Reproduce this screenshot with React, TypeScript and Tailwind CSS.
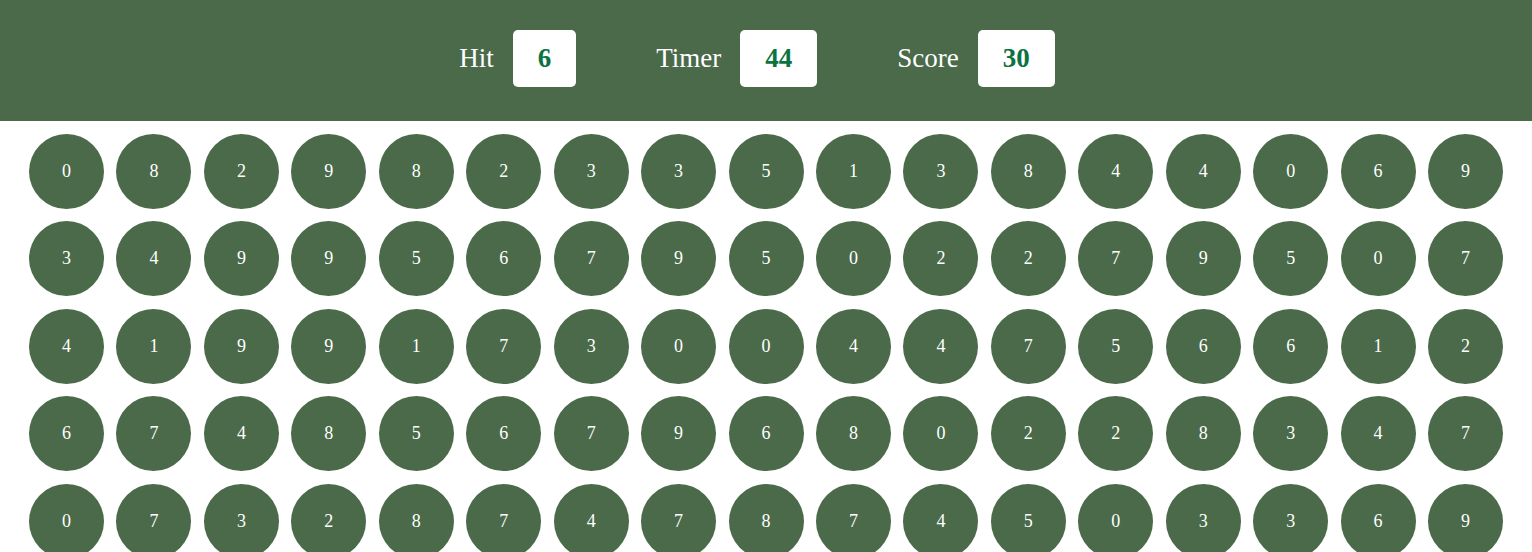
import React from 'react';

const rows = [
  '0 8 2 9 8 2 3 3 5 1 3 8 4 4 0 6 9',
  '3 4 9 9 5 6 7 9 5 0 2 2 7 9 5 0 7',
  '4 1 9 9 1 7 3 0 0 4 4 7 5 6 6 1 2',
  '6 7 4 8 5 6 7 9 6 8 0 2 2 8 3 4 7',
  '0 7 3 2 8 7 4 7 8 7 4 5 0 3 3 6 9',
];

const bubbles = rows.flatMap(r => r.split(' '));

const Stat = ({ label, value }: { label: string; value: string }) => (
  <div className="flex items-center">
    <span className="mr-[19px]">{label}</span>
    <div className="mr-[20px] px-[25px] py-[13px] bg-white rounded-[5px] font-bold text-[#0b733f]">{value}</div>
  </div>
);

const App: React.FC = () => {
  return (
    <div className="w-full min-h-screen bg-white overflow-hidden" style={{ fontFamily: '"Liberation Serif", "Times New Roman", serif' }}>
      <header className="h-[121px] bg-[#4a6a4a] flex items-center justify-center gap-[60px] pb-[4px] pl-[2px] text-white text-[27px] leading-[1.15]">
        <Stat label="Hit" value="6" />
        <Stat label="Timer" value="44" />
        <Stat label="Score" value="30" />
      </header>

      <div className="grid grid-cols-[repeat(17,75px)] justify-between gap-y-[12.5px] px-[29px] pt-[12.5px]">
        {bubbles.map((n, i) => (
          <div key={i} className="w-[75px] h-[75px] rounded-full bg-[#4a6a4a] flex items-center justify-center text-white text-[18px]">
            {n}
          </div>
        ))}
      </div>
    </div>
  );
};

export default App;
